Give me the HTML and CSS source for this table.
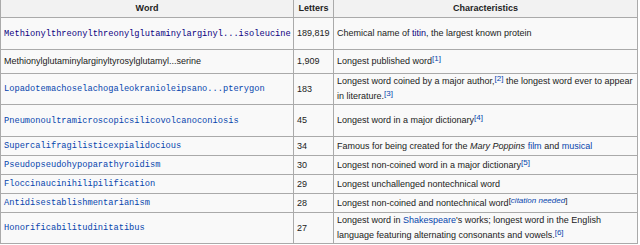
FILE: index.html
```html
<!DOCTYPE html>
<html>
<head>
<meta charset="utf-8">
<link rel="stylesheet" href="styles.css">
</head>
<body>
<table class="wikitable">
  <colgroup>
    <col class="col-word">
    <col class="col-letters">
    <col class="col-chars">
  </colgroup>
  <thead>
    <tr class="row-head">
      <th>Word</th>
      <th>Letters</th>
      <th>Characteristics</th>
    </tr>
  </thead>
  <tbody>
    <tr class="row-tall">
      <td><a class="word visited" href="#">Methionylthreonylthreonylglutaminylarginyl...isoleucine</a></td>
      <td>189,819</td>
      <td>Chemical name of <a class="visited" href="#">titin</a>, the largest known protein</td>
    </tr>
    <tr class="row-mid">
      <td>Methionylglutaminylarginyltyrosylglutamyl...serine</td>
      <td>1,909</td>
      <td>Longest published word<sup><a href="#">[1]</a></sup></td>
    </tr>
    <tr>
      <td><a class="word" href="#">Lopadotemachoselachogaleokranioleipsano...pterygon</a></td>
      <td>183</td>
      <td class="two-line">Longest word coined by a major author,<sup><a href="#">[2]</a></sup> the longest word ever to appear in literature.<sup><a href="#">[3]</a></sup></td>
    </tr>
    <tr class="row-tall">
      <td><a class="word" href="#">Pneumonoultramicroscopicsilicovolcanoconiosis</a></td>
      <td>45</td>
      <td>Longest word in a major dictionary<sup><a href="#">[4]</a></sup></td>
    </tr>
    <tr>
      <td><a class="word" href="#">Supercalifragilisticexpialidocious</a></td>
      <td>34</td>
      <td>Famous for being created for the <i>Mary Poppins</i> <a href="#">film</a> and <a href="#">musical</a></td>
    </tr>
    <tr>
      <td><a class="word" href="#">Pseudopseudohypoparathyroidism</a></td>
      <td>30</td>
      <td>Longest non-coined word in a major dictionary<sup><a href="#">[5]</a></sup></td>
    </tr>
    <tr>
      <td><a class="word" href="#">Floccinaucinihilipilification</a></td>
      <td>29</td>
      <td>Longest unchallenged nontechnical word</td>
    </tr>
    <tr>
      <td><a class="word" href="#">Antidisestablishmentarianism</a></td>
      <td>28</td>
      <td>Longest non-coined and nontechnical word<sup>[<i><a href="#">citation needed</a></i>]</sup></td>
    </tr>
    <tr>
      <td><a class="word" href="#">Honorificabilitudinitatibus</a></td>
      <td>27</td>
      <td class="two-line">Longest word in <a href="#">Shakespeare</a>'s works; longest word in the English language featuring alternating consonants and vowels.<sup><a href="#">[6]</a></sup></td>
    </tr>
  </tbody>
</table>
</body>
</html>
```

FILE: styles.css
```css
html, body {
  margin: 0;
  padding: 0;
  background: #ffffff;
}

.wikitable {
  margin-top: -1px;
  width: 637px;
  table-layout: fixed;
  border-collapse: collapse;
  border: 1px solid #aaaaaa;
  background: #f9f9f9;
  color: #222222;
  font-family: "Liberation Sans", Arial, sans-serif;
  font-size: 9px;
  line-height: 13px;
}

.col-word { width: 293px; }
.col-letters { width: 40px; }
.col-chars { width: 304px; }

.wikitable th,
.wikitable td {
  border: 1px solid #aaaaaa;
  padding: 2px 3px;
  text-align: left;
  vertical-align: middle;
}

.wikitable td.two-line {
  line-height: 15px;
  padding-top: 0;
  padding-bottom: 0;
}

.wikitable th {
  background: #f2f2f2;
  font-weight: bold;
  text-align: center;
}

.row-head { height: 18px; }
.row-tall { height: 32px; }
.row-mid { height: 24px; }

.wikitable a {
  color: #0645ad;
  text-decoration: none;
}

.wikitable a.visited {
  color: #0b0080;
}

.word {
  font-family: "Liberation Mono", "Courier New", monospace;
  font-size: 8.7px;
}

.wikitable sup {
  font-size: 8px;
  line-height: 1;
  vertical-align: 3px;
}

.wikitable i {
  font-style: italic;
}
```
